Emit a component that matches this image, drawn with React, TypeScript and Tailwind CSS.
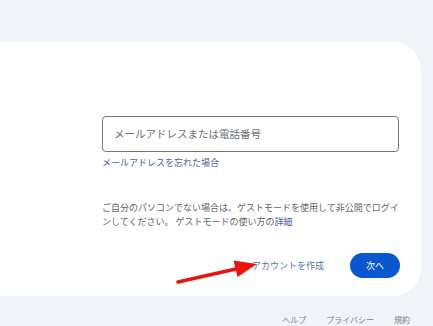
import React from 'react';

const jp = { fontFamily: '"Noto Sans CJK JP", "Noto Sans", sans-serif' };

function RedArrow() {
    return (
        <svg
            className="absolute left-0 top-0 pointer-events-none"
            width={433}
            height={326}
            viewBox="0 0 433 326"
        >
            <line x1={178} y1={282} x2={238} y2={268.5} stroke="#e8140f" strokeWidth={3.6} strokeLinecap="round" />
            <polygon points="257,264 237.5,277 233.5,260.5" fill="#e8140f" />
        </svg>
    );
}

export default function App() {
    return (
        <div className="relative w-[433px] h-[326px] overflow-hidden bg-[#f0f4f9]" style={jp}>
            <div className="pt-[42px]">
                {/* Card */}
                <div className="w-[421px] h-[254px] bg-white rounded-r-[28px] pl-[102px] pr-[22px] pt-[74px]">
                    <div className="h-[36px] border border-[#747775] rounded-[4px] flex items-center px-[11px] text-[10.5px] text-[#6b6f74]">
                        メールアドレスまたは電話番号
                    </div>
                    <div className="mt-[5px] text-[9px] leading-[12px] text-[#3f5f9e]">
                        メールアドレスを忘れた場合
                    </div>
                    <p className="mt-[32px] mr-[-4px] text-[9px] leading-[14px] text-[#5f6368] whitespace-nowrap">
                        ご自分のパソコンでない場合は、ゲストモードを使用して非公開でログイ
                        <br />
                        ンしてください。 ゲストモードの使い方の<span className="text-[#3f5f9e]">詳細</span>
                    </p>
                    <div className="mt-[24px] flex items-center justify-end gap-[26px] -mr-[1px]">
                        <span className="text-[9px] text-[#5a74a8]">アカウントを作成</span>
                        <button className="w-[50px] h-[25px] rounded-full bg-[#0b57d0] text-white text-[9px] flex items-center justify-center">
                            次へ
                        </button>
                    </div>
                </div>

                {/* Footer */}
                <div className="mt-[18px] flex justify-end gap-[20px] pr-[23px] text-[8px] text-[#7a7f86]">
                    <span>ヘルプ</span>
                    <span>プライバシー</span>
                    <span>規約</span>
                </div>
            </div>
            <RedArrow />
        </div>
    );
}
